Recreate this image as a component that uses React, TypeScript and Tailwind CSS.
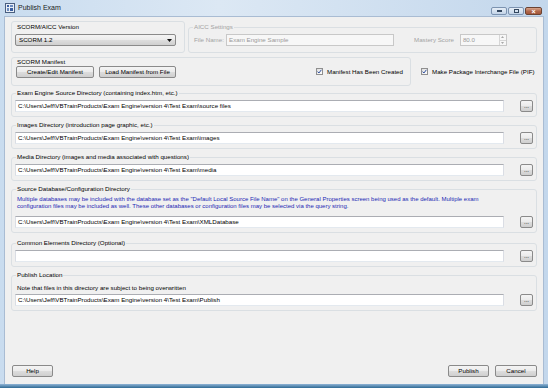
import React from 'react';

const face = "font-['Liberation_Sans',Arial,sans-serif]";

const TextBox = ({ value, disabled, className = '' }: { value?: string; disabled?: boolean; className?: string }) => (
  <div
    className={`h-[12px] border px-[2px] flex items-center text-[6.2px] whitespace-nowrap overflow-hidden ${
      disabled
        ? 'bg-[#f7f7f7] border-[#c8c8c8] text-[#9a9a9a]'
        : 'bg-white border-[#abadb3] border-l-[#dadde4] border-r-[#dadde4] border-b-[#e3e9ef] text-black'
    } ${className}`}
  >
    {value}
  </div>
);

const Button = ({ label, className = '' }: { label: string; className?: string }) => (
  <div
    className={`h-[12px] rounded-[2px] border border-[#8a8a8a] bg-[linear-gradient(#f4f4f4,#ebebeb_50%,#dddddd_50%,#cfcfcf)] flex items-center justify-center text-[6.2px] text-black whitespace-nowrap ${className}`}
  >
    {label}
  </div>
);

const Check = ({ label }: { label: string }) => (
  <div className="flex items-center">
    <div className="w-[7px] h-[7px] border border-[#8f8f8f] bg-[linear-gradient(135deg,#dedede,#ffffff)] flex items-center justify-center">
      <svg width="5" height="5" viewBox="0 0 5 5">
        <path d="M0.6 2.6 L1.9 4 L4.4 0.8" fill="none" stroke="#2a4c9c" strokeWidth="1" />
      </svg>
    </div>
    <span className="ml-[4px] text-[6.2px] whitespace-nowrap">{label}</span>
  </div>
);

const Group = ({ title, children, className = '' }: { title: string; children: React.ReactNode; className?: string }) => (
  <fieldset className={`border border-[#dadfe3] rounded-[3px] px-[3px] pb-[4px] ${className}`}>
    <legend className="ml-[1px] px-[1px] text-[6.2px] leading-[8px]">{title}</legend>
    {children}
  </fieldset>
);

const PathRow = ({ value }: { value?: string }) => (
  <div className="flex items-center mt-[3px]">
    <TextBox value={value} className="flex-1" />
    <Button label="..." className="w-[13px] ml-[16px] text-[#707070]" />
  </div>
);

const base = 'C:\\Users\\Jeff\\VBTrainProducts\\Exam Engine\\version 4\\Test Exam\\';

export default function App() {
  return (
    <div className={`w-[548px] h-[388px] flex flex-col bg-[linear-gradient(90deg,#c9dcef,#dce8f4_40%,#c3d7ec)] ${face} text-black`}>
      {/* title bar */}
      <div className="h-[16px] flex items-center pl-[5px] pr-[6px]">
        <svg width="10" height="10" viewBox="0 0 10 10">
          <rect x="0.5" y="0.5" width="9" height="9" fill="#e8eef6" stroke="#4a5f80" />
          <rect x="2" y="2" width="2" height="2" fill="#3a5fa0" />
          <rect x="5" y="2" width="3" height="2" fill="#6b8cc0" />
          <rect x="2" y="5" width="2" height="3" fill="#6b8cc0" />
          <rect x="5" y="5" width="3" height="3" fill="#3a5fa0" />
        </svg>
        <span className="ml-[3px] text-[7px] text-[#1b1b1b]">Publish Exam</span>
        <div className="ml-auto flex self-end mb-[1px] gap-[1px]">
          <div className="w-[16px] h-[8px] rounded-[2px] border border-[#7c93b0] bg-[linear-gradient(#e6eef7,#c3d4e8)] flex items-center justify-center">
            <div className="w-[5px] h-[2px] bg-[#33475f]" />
          </div>
          <div className="w-[16px] h-[8px] rounded-[2px] border border-[#7c93b0] bg-[linear-gradient(#e6eef7,#c3d4e8)] flex items-center justify-center">
            <div className="w-[5px] h-[4px] border border-[#33475f]" />
          </div>
          <div className="w-[17px] h-[8px] rounded-[2px] border border-[#6b4332] bg-[linear-gradient(#d9a58c,#b0684b_55%,#a3553a)] flex items-center justify-center text-white text-[7px] leading-none font-bold">
            ×
          </div>
        </div>
      </div>

      {/* client area */}
      <div className="flex-1 mx-[4px] bg-[#f0f0f0] border border-[#a9bcd3] border-b-0 flex flex-col pt-[4px] px-[6px] pb-[7px] text-[6.2px]">
        {/* row 1 */}
        <div className="flex h-[32px]">
          <div className="w-[174px] border border-[#dadfe3] rounded-[3px] pl-[3px] pt-[1px]">
            <div className="leading-[8px] ml-[2px]">SCORM/AICC Version</div>
            <div className="mt-[3px] w-[161px] h-[12px] rounded-[2px] border border-[#8a8a8a] bg-[linear-gradient(#f4f4f4,#ebebeb_50%,#dddddd_50%,#cfcfcf)] flex items-center pl-[3px] pr-[3px]">
              <span>SCORM 1.2</span>
              <svg className="ml-auto" width="5" height="3" viewBox="0 0 5 3">
                <path d="M0 0 H5 L2.5 3 Z" fill="#111" />
              </svg>
            </div>
          </div>
          <fieldset className="ml-[3px] flex-1 mt-[2px] border border-[#dadfe3] rounded-[3px] px-[3px] pb-[6px] text-[#a3a3a3]">
            <legend className="ml-[1px] px-[1px] leading-[8px]">AICC Settings</legend>
            <div className="flex items-center mt-[3px]">
              <span className="ml-[2px] w-[32px]">File Name:</span>
              <TextBox value="Exam Engine Sample" disabled className="w-[168px]" />
              <span className="ml-[20px]">Mastery Score</span>
              <div className="ml-[6px] w-[47px] h-[12px] flex border border-[#c8c8c8] bg-[#f7f7f7]">
                <span className="flex-1 pl-[2px] flex items-center text-[#9a9a9a]">80.0</span>
                <div className="w-[7px] flex flex-col border-l border-[#d6d6d6]">
                  <div className="flex-1 flex items-center justify-center border-b border-[#d6d6d6]">
                    <svg width="3" height="2" viewBox="0 0 3 2"><path d="M0 2 H3 L1.5 0 Z" fill="#a8a8a8" /></svg>
                  </div>
                  <div className="flex-1 flex items-center justify-center">
                    <svg width="3" height="2" viewBox="0 0 3 2"><path d="M0 0 H3 L1.5 2 Z" fill="#a8a8a8" /></svg>
                  </div>
                </div>
              </div>
            </div>
          </fieldset>
        </div>

        {/* row 2 */}
        <div className="flex items-center mt-[4px]">
          <div className="w-[400px] h-[29px] border border-[#dadfe3] rounded-[3px] pl-[4px] pr-[7px]">
            <div className="leading-[8px] ml-[1px]">SCORM Manifest</div>
            <div className="flex items-center">
              <Button label="Create/Edit Manifest" className="w-[78px]" />
              <Button label="Load Manifest from File" className="w-[77px] ml-[5px]" />
              <div className="ml-auto">
                <Check label="Manifest Has Been Created" />
              </div>
            </div>
          </div>
          <div className="ml-[10px]">
            <Check label="Make Package Interchange File (PIF)" />
          </div>
        </div>

        <Group title="Exam Engine Source Directory (containing index.htm, etc.)" className="mt-[3px]">
          <PathRow value={base + 'source files'} />
        </Group>

        <Group title="Images Directory (introduction page graphic, etc.)" className="mt-[4px]">
          <PathRow value={base + 'images'} />
        </Group>

        <Group title="Media Directory (images and media associated with questions)" className="mt-[4px]">
          <PathRow value={base + 'media'} />
        </Group>

        <Group title="Source Database/Configuration Directory" className="mt-[4px]">
          <p className="mt-[3px] ml-[2px] pr-[20px] leading-[7px] text-[6px] text-[#2328b4]">
            Multiple databases may be included with the database set as the "Default Local Source File Name" on the General Properties screen being used as the default. Multiple exam configuration files may be included as well. These other databases or configuration files may be selected via the query string.
          </p>
          <div className="mt-[6px]">
            <PathRow value={base + 'XMLDatabase'} />
          </div>
        </Group>

        <Group title="Common Elements Directory (Optional)" className="mt-[6px]">
          <PathRow />
        </Group>

        <Group title="Publish Location" className="mt-[4px] pb-[2px]">
          <p className="mt-[5px] ml-[2px] leading-[7px]">Note that files in this directory are subject to being overwritten</p>
          <div className="mt-[1px]">
            <PathRow value={base + 'Publish'} />
          </div>
        </Group>

        <div className="mt-auto flex items-center">
          <Button label="Help" className="w-[41px] ml-[1px]" />
          <Button label="Publish" className="w-[41px] ml-auto" />
          <Button label="Cancel" className="w-[42px] ml-[6px]" />
        </div>
      </div>
      <div className="h-[4px] bg-[linear-gradient(#8fb4d6,#2f6a94)]" />
    </div>
  );
}
